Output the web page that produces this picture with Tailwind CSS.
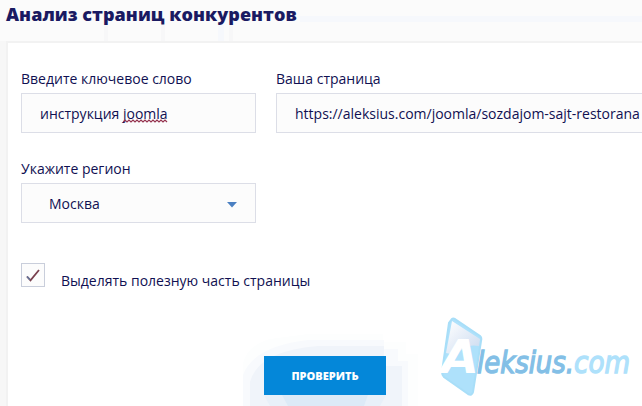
<!DOCTYPE html>
<html lang="ru">
<head>
<meta charset="utf-8">
<title>Анализ страниц конкурентов</title>
<script src="https://cdn.jsdelivr.net/npm/@tailwindcss/browser@4"></script>
</head>
<body class="relative h-[406px] w-[642px] overflow-hidden bg-[#fbfbfb] font-['Open_Sans','Noto_Sans',sans-serif] text-[14px] leading-5 text-[#101052]">
<svg class="absolute inset-0" width="642" height="406" aria-hidden="true">
  <path d="M0 41h8v365H0z" fill="#f7f7f7"/>
  <path d="M104 25h4v18h-4zM161 25h4v18h-4zM229 25h4v18h-4z" fill="#f7f7f8"/>
  <path d="M300 16h342v6H300zM218 25h6v18h-6z" fill="#f6f8fc"/>
</svg>
<main class="relative flex h-[406px] flex-col">
  <h1 class="h-[41px] pl-[6px] pt-[2px] text-[18px] leading-6 font-extrabold tracking-[0.05px] whitespace-nowrap text-[#1a1a62]">Анализ страниц конкурентов</h1>
  <form class="relative ml-[6px] flex h-[365px] w-[636px] flex-col overflow-hidden border-t-2 border-l-2 border-[#f2f2f2] bg-white pl-[13px]">
    <svg class="absolute top-0 left-0" width="634" height="363" aria-hidden="true">
      <path d="M235 363V320Q240 302 262 296L300 291H375V299H398V311H410V363Z" fill="#fdfefe"/>
      <path d="M235 363V332Q246 303 300 297H376V306H390V318H400V363Z" fill="#f8fafd"/>
      <path d="M242 363V339Q250 308 310 303H376V323H394V363Z" fill="#f0f4fa"/>
      <path d="M256 352H378L372 363H262Z" fill="#e8f0f9"/>
      <path d="M274 352H360L356 363H280Z" fill="#dceaf7"/>
    </svg>
    <div class="relative flex gap-5 pt-[26px]">
      <label class="flex w-[235px] shrink-0 flex-col gap-1"><span>Введите ключевое слово</span>
        <span class="flex h-10 items-center border border-[#dcdee7] bg-[#fcfcfc] pt-[2px] pl-[18px] whitespace-pre">инструкция <span class="relative">joomla<svg class="absolute top-[15px] left-0" width="45" height="4"><path d="M0 3 2 1 4 3 6 1 8 3 10 1 12 3 14 1 16 3 18 1 20 3 22 1 24 3 26 1 28 3 30 1 32 3 34 1 36 3 38 1 40 3 42 1 44 3" fill="none" stroke="#963450" stroke-width="1.2"/></svg></span></span>
      </label>
      <label class="flex min-w-0 flex-1 flex-col gap-1"><span>Ваша страница</span>
        <span class="flex h-10 items-center border border-r-0 border-[#dcdee7] bg-[#fcfcfc] pt-[2px] pl-[18px] whitespace-nowrap">https://aleksius.com/joomla/sozdajom-sajt-restorana</span>
      </label>
    </div>
    <label class="relative mt-[26px] flex w-[235px] flex-col gap-1"><span>Укажите регион</span>
      <span class="flex h-10 items-center justify-between border border-[#dcdee7] bg-[#fcfcfc] pt-[2px] pr-[18px] pl-[27px]">Москва
        <svg class="mt-[2px]" width="10" height="6"><path d="M0 0H10L5 5.5Z" fill="#4b80c2"/></svg>
      </span>
    </label>
    <div class="relative mt-10 flex h-7 gap-4">
      <span class="flex size-6 items-center justify-center border border-[#c9cedb] bg-[#fcfcfc]"><svg width="14" height="13" fill="none"><path d="M1 7.5 4.5 11.3 13 1" stroke="#79404e" stroke-width="1.8"/><path d="M1 7.5 4 10.8" stroke="#63759b" stroke-width="1.4"/></svg></span>
      <span class="pt-2">Выделять полезную часть страницы</span>
    </div>
    <button type="button" class="relative mt-[65px] ml-[243px] h-[39px] w-[122px] shrink-0 bg-[#0487d9] text-[11px] font-extrabold text-white">ПРОВЕРИТЬ</button>
  </form>
</main>
<svg class="absolute top-[310px] left-[436px]" width="206" height="92" aria-label="Aleksius.com">
  <defs><linearGradient id="sheen" x1="0" y1="0" x2="1" y2="1"><stop stop-color="#fff"/><stop offset="1" stop-color="#c9d9ef"/></linearGradient></defs>
  <path d="M16 9Q17 8 19 9L44 26Q46 28 45 31L37 82Q36 86 32 84L8 67Q6 65 6 62L13 13Z" fill="#aee1fb" stroke="#a8def8" stroke-width="2"/>
  <path d="M16 11 44 29 43 36Q29 33 20 45L10 43Z" fill="url(#sheen)"/>
  <g font-family="'DejaVu Sans',sans-serif" font-style="italic">
    <text x="5" y="63" font-size="46" textLength="38" lengthAdjust="spacingAndGlyphs" font-weight="bold" fill="#fff">A</text>
    <text x="41" y="63" font-size="31" textLength="97" lengthAdjust="spacingAndGlyphs" fill="#83bfe6" stroke="#83bfe6" stroke-width="1.4">leksius.</text>
    <text x="138" y="63" font-size="31" textLength="56" lengthAdjust="spacingAndGlyphs" fill="#aee1fb" stroke="#aee1fb" stroke-width="1.4">com</text>
  </g>
</svg>
</body>
</html>
